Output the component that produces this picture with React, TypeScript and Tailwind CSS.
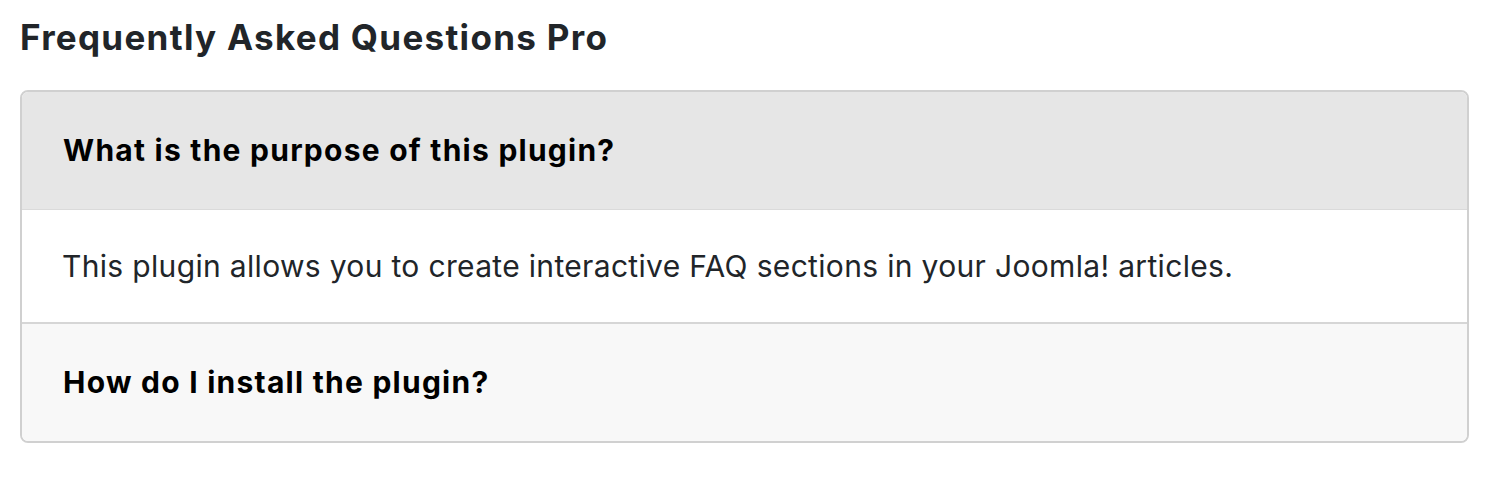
import React from "react";

export default function App() {
  const font = { fontFamily: 'Inter, "Liberation Sans", sans-serif' };
  return (
    <div className="min-h-[484px] bg-white pl-[20px] pr-[25px] pt-[18px]" style={font}>
      <h2 className="text-[35px] leading-[38px] font-bold text-[#212529] tracking-[1.3px]">
        Frequently Asked Questions Pro
      </h2>
      <div className="mt-[34px] rounded-[8px] border-2 border-[#d0d0d0] overflow-hidden">
        <div className="bg-[#e6e6e6] px-[41px] py-[42px] text-[30px] leading-[33px] font-bold text-black tracking-[1.25px]">
          What is the purpose of this plugin?
        </div>
        <div className="border-t border-[#dadada] bg-white px-[40px] py-[36px] text-[30px] leading-[40px] text-[#212529] tracking-[0.33px]">
          This plugin allows you to create interactive FAQ sections in your Joomla! articles.
        </div>
        <div className="border-t-2 border-[#d6d6d6] bg-[#f8f8f8] px-[41px] pt-[42px] pb-[43px] text-[30px] leading-[32px] font-bold text-black tracking-[1.25px]">
          How do I install the plugin?
        </div>
      </div>
    </div>
  );
}
